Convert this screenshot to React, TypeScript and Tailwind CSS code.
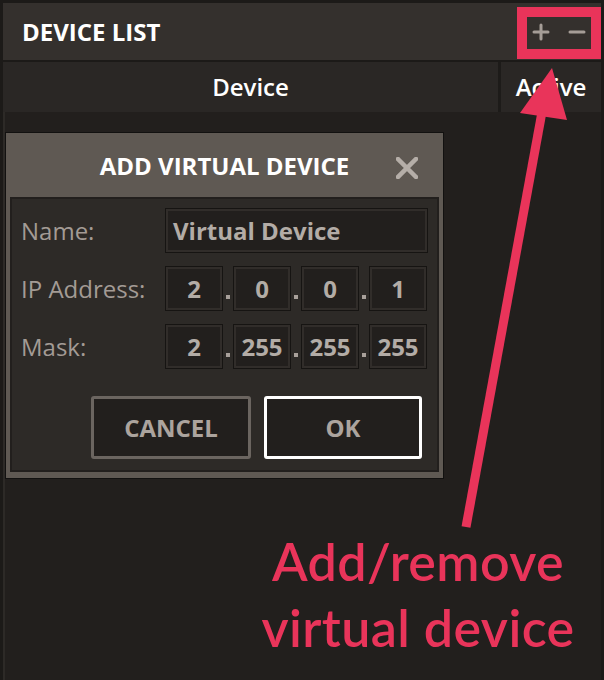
import { Minus, Plus } from 'lucide-react'

const labelCls = "w-[144px] shrink-0 text-[24px] text-[#a39b95]"
const boxCls =
  "h-full flex items-center justify-center bg-[#221f1d] border border-[#161412] shadow-[inset_0_0_0_2px_#312d2a] text-[24px] font-bold text-[#b3aca6]"

function Dot() {
  return <div className="w-[10px] shrink-0 self-end mb-[12px] flex justify-center"><div className="w-[4px] h-[4px] bg-[#a8a09a]" /></div>
}

function AddressRow({ label, parts }: { label: string; parts: string[] }) {
  return (
    <div className="flex items-center h-[45px]">
      <span className={labelCls}>{label}</span>
      <div className="flex h-full">
        {parts.map((p, i) => (
          <div key={i} className="flex h-full">
            {i > 0 && <Dot />}
            <div className={`${boxCls} w-[58px]`}>{p}</div>
          </div>
        ))}
      </div>
    </div>
  )
}

function AddDeviceDialog() {
  return (
    <div className="absolute left-[5px] top-[132px] w-[439px] border border-[#121110] bg-[#5f5953]">
      <div className="relative h-[64px] flex items-center justify-center pt-[2px]">
        <span className="text-[24px] font-bold text-white">ADD VIRTUAL DEVICE</span>
        <svg className="absolute right-[25px] top-[24px]" width="22" height="22" viewBox="0 0 22 22">
          <path d="M2 2 L20 20 M20 2 L2 20" stroke="#b5aea8" strokeWidth="4.5" strokeLinecap="square" />
        </svg>
      </div>
      <div className="mx-[4px] mb-[6px] border-2 border-[#221f1d] bg-[#2d2a27] pt-[9px] pb-[11px] pl-[9px] pr-[9px]">
        <div className="flex flex-col gap-[13px]">
          <div className="flex items-center h-[45px]">
            <span className={labelCls}>Name:</span>
            <div className={`${boxCls} flex-1 justify-start pl-[7px]`}>Virtual Device</div>
          </div>
          <AddressRow label="IP Address:" parts={['2', '0', '0', '1']} />
          <AddressRow label="Mask:" parts={['2', '255', '255', '255']} />
        </div>
        <div className="flex justify-end gap-[13px] pr-[6px] mt-[27px]">
          <button className="w-[160px] h-[63px] rounded-[3px] border-[3px] border-[#6b6560] bg-[#221f1d] text-[24px] font-bold text-[#aca49e]">
            CANCEL
          </button>
          <button className="w-[158px] h-[63px] rounded-[3px] border-[3px] border-white bg-[#221f1d] text-[24px] font-bold text-[#aca49e]">
            OK
          </button>
        </div>
      </div>
    </div>
  )
}

export default function App() {
  return (
    <div className="relative w-[604px] h-[680px] overflow-hidden bg-[#1c1a18] font-['Open_Sans',sans-serif]">
      <div className="flex flex-col h-full pt-[3px] px-[3px]">
        <div className="h-[57px] shrink-0 bg-[#34302d] flex items-center justify-between pl-[19px] pr-[12px]">
          <span className="text-[24px] font-bold text-white">DEVICE LIST</span>
          <div className="flex items-center gap-[12px] text-[#a59d97]">
            <Plus size={24} strokeWidth={3} absoluteStrokeWidth />
            <Minus size={24} strokeWidth={3} absoluteStrokeWidth />
          </div>
        </div>
        <div className="h-[50px] shrink-0 mt-[2px] flex bg-[#2a2725]">
          <div className="w-[495px] flex items-center justify-center text-[24px] font-semibold text-white">Device</div>
          <div className="w-[3px] bg-[#1d1b19]" />
          <div className="flex-1 flex items-center justify-center text-[24px] font-semibold text-white">Active</div>
        </div>
        <div className="flex-1 bg-[#221f1d] border-l-2 border-[#2d2a27]" />
      </div>

      <AddDeviceDialog />

      {/* annotation */}
      <svg className="absolute inset-0 pointer-events-none" width="604" height="680" viewBox="0 0 604 680">
        <rect x="522" y="12" width="74" height="42" fill="none" stroke="#e9345a" strokeWidth="10" />
        <line x1="466" y1="527" x2="542" y2="112" stroke="#e9345a" strokeWidth="9" />
        <polygon points="552,68 520,113 567,120" fill="#e9345a" />
      </svg>
      <div className="absolute left-[218px] top-[528px] w-[400px] text-center font-['Lato',sans-serif] font-semibold text-[52px] tracking-[0.4px] leading-[66px] text-[#e9345a]">
        Add/remove
        <br />
        virtual device
      </div>
    </div>
  )
}
